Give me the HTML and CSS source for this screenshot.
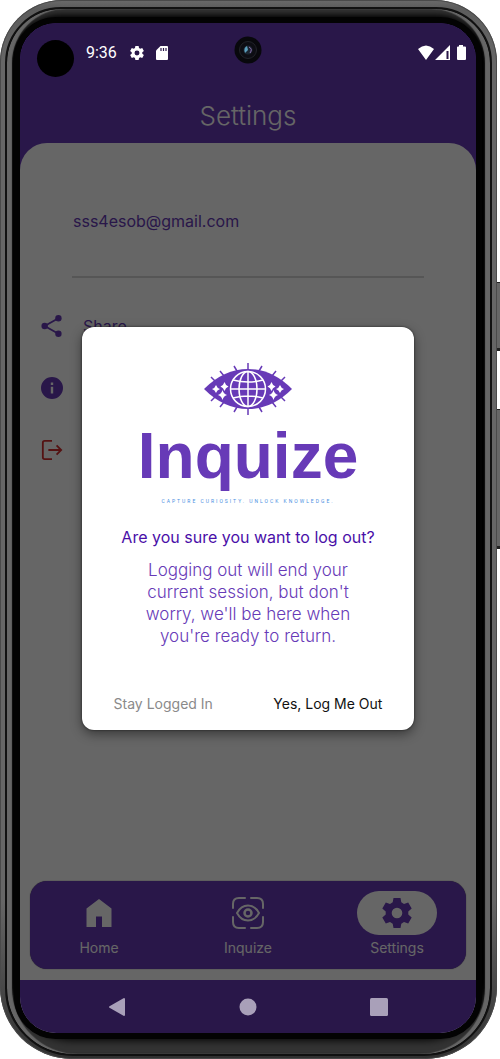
FILE: index.html
```html
<!DOCTYPE html>
<html lang="en">
<head>
<meta charset="utf-8">
<meta name="viewport" content="width=device-width, initial-scale=1">
<title>Settings - Inquize</title>
<link rel="stylesheet" href="styles.css">
</head>
<body>
<div class="phone">
  <span class="side-key side-key-power"></span>
  <span class="side-key side-key-volume"></span>
  <div class="bezel">
  <div class="screen">
    <div class="app">
      <header class="top">
        <h1 class="title">Settings</h1>
      </header>
      <main class="panel">
        <p class="email">sss4esob@gmail.com</p>
        <hr class="rule">
        <ul class="options">
          <li><button class="option" type="button">
            <svg class="option-icon" viewBox="0 0 24 24" fill="currentColor"><circle cx="19" cy="3.500" r="3.500"/><circle cx="4" cy="12" r="3.500"/><circle cx="19" cy="20.500" r="3.500"/><path d="M19 3.500 4 12l15 8.500" fill="none" stroke="currentColor" stroke-width="2"/></svg>
            <span>Share</span></button></li>
          <li><button class="option" type="button">
            <svg class="option-icon" viewBox="0 0 24 24" fill="currentColor"><path fill-rule="evenodd" d="M12 0a12 12 0 1 0 0 24 12 12 0 0 0 0-24zm-1.300 6h2.600v2.600h-2.600zm0 4.500h2.600v7.500h-2.600z"/></svg>
            <span>About</span></button></li>
          <li><button class="option option-danger" type="button">
            <svg class="option-icon" viewBox="0 0 24 24" fill="none" stroke="currentColor" stroke-width="2"><path d="M12 2H4Q2 2 2 4v16q0 2 2 2h8M8 12h14M17 7l5 5-5 5"/></svg>
            <span>Log out</span></button></li>
        </ul>
      </main>
      <nav class="tabs">
        <a class="tab" href="#home">
          <span class="tab-icon"><svg width="26" height="28" viewBox="0 0 26 28" fill="currentColor"><path d="M13 0 .5 9.500V28H10V17.500h6V28h9.500V9.500z"/></svg></span>
          Home</a>
        <a class="tab" href="#inquize">
          <span class="tab-icon"><svg width="34" height="34" viewBox="0 0 34 34" fill="none" stroke="currentColor" stroke-width="2" stroke-linecap="round"><path d="M2 12V8q0-6 6-6h6M20 2h6q6 0 6 6v4M32 21v5q0 6-6 6h-6M14 32H8q-6 0-6-6v-5"/><path d="M6 17Q10 9.500 17 9.500T28 17Q24 24.500 17 24.500T6 17z"/><circle cx="17" cy="17" r="3.500" stroke-width="2.500"/></svg></span>
          Inquize</a>
        <a class="tab" href="#settings" aria-current="page">
          <span class="tab-icon"><svg width="30" height="30" viewBox="0 0 30 30" fill="currentColor"><path fill-rule="evenodd" d="M11.500 0h7l.8 4.300 2.700 1.600L26.200 4.400l3.500 6.100-3.400 2.900v3.200l3.400 2.900-3.500 6.100-4.200-1.500-2.700 1.600-.8 4.300h-7l-.8-4.300L8 24.100l-4.200 1.500L.3 19.500l3.400-2.900v-3.200L.3 10.500l3.500-6.100L8 5.900l2.700-1.600zM15 9.700a5.300 5.300 0 1 0 0 10.600 5.300 5.300 0 0 0 0-10.600z"/></svg></span>
          Settings</a>
      </nav>
      <div class="system-space"></div>
    </div>

    <div class="scrim">
      <section class="dialog" role="dialog" aria-modal="true" aria-labelledby="dialog-title">
        <div class="brand">
          <svg class="brand-eye" viewBox="0 0 88 52">
            <g stroke="#673ab7" stroke-width="1.500"><path d="M44 0v52M30 3l3 5M58 3l-3 5M16 8l4 5M72 8l-4 5M7 14l4 4M81 14l-4 4M30 49l3-5M58 49l-3-5M16 44l4-5M72 44l-4-5M7 38l4-4M81 38l-4-4"/></g>
            <path fill="#673ab7" d="M0 26Q20 6 44 6t44 20Q68 46 44 46T0 26z"/>
            <g fill="none" stroke="#fff" stroke-width="1.500"><circle cx="44" cy="26" r="17.500"/><ellipse cx="44" cy="26" rx="9" ry="17.500"/><path d="M44 8.500v35M26.500 26h35M29 17q15 4 30 0M29 35q15-4 30 0"/></g>
            <g fill="#fff"><path d="M12 22q1 3 4 4-3 1-4 4-1-3-4-4 3-1 4-4z"/><path d="M20.500 19q1 3.500 4 4.500-3 1-4 4.500-1-3.500-4-4.500 3-1 4-4.500z"/><path d="M18.500 27q1 4 4.500 5-3.500 1-4.500 5-1-4-4.500-5 3.500-1 4.500-5z"/><path d="M76 22q1 3 4 4-3 1-4 4-1-3-4-4 3-1 4-4z"/><path d="M67.500 19q1 3.500 4 4.500-3 1-4 4.500-1-3.500-4-4.500 3-1 4-4.500z"/><path d="M69.500 27q1 4 4.500 5-3.500 1-4.500 5-1-4-4.500-5 3.500-1 4.500-5z"/></g>
          </svg>
          <div class="brand-name">Inquize</div>
          <div class="brand-tagline">CAPTURE CURIOSITY. UNLOCK KNOWLEDGE.</div>
        </div>
        <h2 class="dialog-title" id="dialog-title">Are you sure you want to log out?</h2>
        <p class="dialog-text">Logging out will end your current session, but don't worry, we'll be here when you're ready to return.</p>
        <div class="dialog-actions">
          <button class="action action-quiet" type="button">Stay Logged In</button>
          <button class="action" type="button">Yes, Log Me Out</button>
        </div>
      </section>
    </div>

    <div class="status">
      <span class="status-dot"></span>
      <span class="clock">9:36</span>
      <svg class="status-icon" viewBox="0 0 30 30" fill="#fff"><path fill-rule="evenodd" d="M11.500 0h7l.8 4.300 2.700 1.600L26.200 4.400l3.500 6.100-3.400 2.900v3.200l3.400 2.900-3.500 6.100-4.200-1.500-2.700 1.600-.8 4.300h-7l-.8-4.300L8 24.100l-4.200 1.500L.3 19.500l3.400-2.900v-3.200L.3 10.500l3.500-6.100L8 5.900l2.700-1.600zM15 9.700a5.300 5.300 0 1 0 0 10.600 5.300 5.300 0 0 0 0-10.600z"/></svg>
      <svg class="status-card" viewBox="0 0 12 14"><path fill="#fff" d="M4.500 0H11q1 0 1 1v12q0 1-1 1H1q-1 0-1-1V4.500z"/><path d="M5 2v3M7.500 2v3M10 2v3" stroke="#2a174a" stroke-width="1.200"/></svg>
      <span class="status-fill"></span>
      <svg class="status-radio" viewBox="0 0 49 16"><path fill="#fff" d="M0 4Q8-3 16 4L8 15zM32 0v15H17z"/><path d="M29.500 6v8" stroke="#2a174a" stroke-width="2"/><path fill="#fff" d="M41 0h4v1.500h2q1 0 1 1V14q0 1-1 1h-7q-1 0-1-1V2.500q0-1 1-1h1z"/></svg>
    </div>
    <svg class="camera" viewBox="0 0 28 28"><circle cx="14" cy="14" r="13.500" fill="#08080c"/><circle cx="14" cy="14" r="8.500" fill="#0d0d13" stroke="#22242a"/><circle cx="14" cy="14" r="4.500" fill="#1b2530"/><path d="M13 10q-4 2-2 7l3-3z" fill="#5b9fbd"/><path d="M15 11q4 2 1 6" stroke="#8f70b0" fill="none"/></svg>

    <div class="system">
      <button class="system-key" type="button" aria-label="Back"><svg width="18" height="20" viewBox="0 0 18 20"><path d="M16 2v16L2 10z" fill="#a9a0b9" stroke="#a9a0b9" stroke-width="2" stroke-linejoin="round"/></svg></button>
      <button class="system-key" type="button" aria-label="Home"><svg width="18" height="18" viewBox="0 0 18 18"><circle cx="9" cy="9" r="8.500" fill="#a9a0b9"/></svg></button>
      <button class="system-key" type="button" aria-label="Recent apps"><svg width="18" height="18" viewBox="0 0 18 18"><rect width="18" height="18" rx="1.500" fill="#a9a0b9"/></svg></button>
    </div>
  </div>
  </div>
</div>
</body>
</html>
```
FILE: styles.css
```css
* { box-sizing: border-box; }
body {
  margin: 0;
  background: #fff;
  font-family: Inter, "Liberation Sans", sans-serif;
}
h1, h2, p, ul { margin: 0; padding: 0; font-weight: 400; }
ul { list-style: none; }
button { border: 0; padding: 0; background: none; font: inherit; color: inherit; }
svg { display: block; }

.phone {
  position: relative;
  display: flex;
  min-height: 100vh;
  margin-right: 3px;
  padding: 7px 5px 3px;
  border-radius: 62px 62px 72px 72px;
  background: linear-gradient(#6a6a6a, #5c5c5c 8px, #666 60px, #666 85%, #303030);
  box-shadow: inset 0 0 0 1px #4a4a4a;
}
.bezel {
  flex: 1;
  display: flex;
  padding: 12px 6px 17px;
  border: 2px solid #111;
  border-radius: 56px 56px 68px 68px;
  background: #000;
  box-shadow: inset 5px 0 1px #666, inset -5px 0 1px #666, inset 0 6px 6px #333, inset 0 -14px 8px #333;
}
.side-key {
  position: absolute;
  right: -4px;
  width: 4px;
  border: solid #222;
  border-width: 1px 0 3px;
  background: #666;
}
.side-key-power { top: 282px; height: 69px; }
.side-key-volume { top: 409px; height: 140px; }

.screen {
  position: relative;
  flex: 1;
  display: flex;
  overflow: hidden;
  margin: 2px 8px 4px 7px;
  border-radius: 36px;
  background: #673ab7;
  outline: 6px solid #030303;
}
.app {
  flex: 1;
  display: flex;
  flex-direction: column;
  background: linear-gradient(#673ab7 50%, #fff 50%);
}
.top { padding: 75px 0 9px; background: #673ab7; text-align: center; }
.title { font-size: 26px; line-height: 36px; font-weight: 300; color: #fff; }
.panel {
  flex: 1;
  padding: 67px 21px 0;
  border-radius: 27px 27px 0 0;
  background: #fff;
  color: #673ab7;
}
.email { padding-left: 32px; font-size: 16px; line-height: 22px; }
.rule { margin: 44px 31px 36px; border: 0; border-top: 2px solid #d8d8d8; }
.options { display: grid; gap: 38px; }
.option { display: flex; align-items: center; gap: 20px; height: 24px; font-size: 16px; }
.option-icon { width: 22px; height: 22px; }
.option-danger { color: #d32f2f; }

.tabs {
  display: flex;
  justify-content: space-between;
  margin: 0 10px 11px;
  padding: 10px 29px 12px;
  border-radius: 17px;
  background: #673ab7;
  box-shadow: 0 0 1px #444;
}
.tab {
  display: grid;
  justify-items: center;
  gap: 4px;
  color: #fff;
  font-size: 14px;
  line-height: 18px;
  text-decoration: none;
}
.tab-icon { display: grid; place-items: center; width: 80px; height: 44px; border-radius: 22px; }
.tab[aria-current] .tab-icon { background: #fff; color: #673ab7; }
.system-space { height: 53px; background: #673ab7; }

.scrim {
  position: absolute;
  inset: 0;
  display: grid;
  place-items: center;
  background: rgba(0, 0, 0, .6);
}
.dialog {
  width: 73%;
  padding: 36px 24px 17px;
  border-radius: 12px;
  background: #fff;
  box-shadow: 0 4px 12px rgba(0, 0, 0, .45), 0 0 2px #222;
  text-align: center;
}
.brand { display: grid; justify-items: center; }
.brand-eye { width: 88px; height: 52px; }
.brand-name {
  margin-top: 4px;
  font-family: "Liberation Sans", sans-serif;
  font-size: 64px;
  line-height: 74px;
  font-weight: 700;
  color: #673ab7;
}
.brand-tagline {
  margin-top: 2px;
  font-family: Roboto, sans-serif;
  font-size: 5px;
  line-height: 12px;
  letter-spacing: 2px;
  color: #4a90e2;
}
.dialog-title { margin-top: 18px; font-size: 16px; line-height: 24px; color: #4a0fa8; }
.dialog-text {
  max-width: 220px;
  margin: 10px auto 0;
  font-size: 17px;
  line-height: 22px;
  font-weight: 300;
  color: #673ab7;
}
.dialog-actions { display: flex; justify-content: space-between; margin-top: 48px; padding: 0 8px; }
.action { font-size: 14px; line-height: 18px; color: #111; }
.action-quiet { color: #8a8a8a; }

.status {
  position: absolute;
  inset: 11px 9px auto 17px;
  display: flex;
  align-items: center;
  height: 37px;
}
.status-dot {
  align-self: flex-start;
  width: 37px;
  height: 37px;
  margin: 6px 12px 0 0;
  border-radius: 50%;
  background: #000;
}
.clock { margin-right: 13px; font: 400 16px/20px Roboto, sans-serif; color: #fff; }
.status-icon { width: 14px; height: 14px; margin-right: 12px; }
.status-card { width: 12px; height: 14px; }
.status-fill { flex: 1; }
.status-radio { width: 49px; height: 16px; }
.camera { position: absolute; top: 13px; left: calc(50% - 14px); width: 28px; height: 28px; }

.system {
  position: absolute;
  inset: auto 0 0;
  display: flex;
  justify-content: space-around;
  align-items: center;
  height: 53px;
  padding: 0 31px;
}
.system-key { display: grid; place-items: center; width: 48px; height: 48px; }
```
